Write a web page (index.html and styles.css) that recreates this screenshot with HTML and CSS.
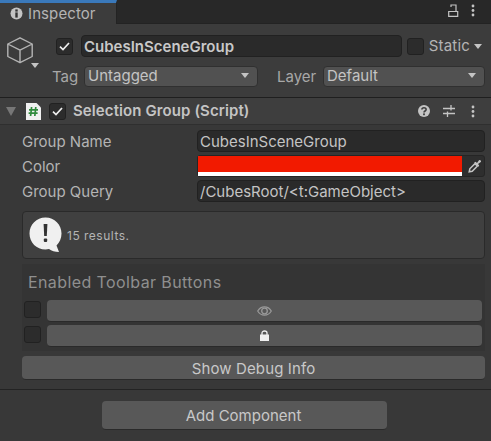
FILE: index.html
```html
<!DOCTYPE html>
<html lang="en">
<head>
    <meta charset="UTF-8">
    <meta name="viewport" content="width=device-width, initial-scale=1.0">
    <title>Inspector</title>
    <link rel="stylesheet" href="styles.css">
</head>
<body>
    <div class="tabbar">
        <div class="tab">
            <svg class="tab-icon" width="13" height="13" viewBox="0 0 13 13"><circle cx="6.5" cy="6.5" r="6" fill="#c4c4c4"/><rect x="5.3" y="2.4" width="2.4" height="2.2" fill="#333"/><rect x="5.3" y="5.4" width="2.4" height="5.2" fill="#333"/></svg>
            <span>Inspector</span>
        </div>
        <div class="tab-actions">
            <svg width="11" height="13" viewBox="0 0 11 13"><path d="M.7 7.5h9v4.8h-9zM8 7.5V1H3V3" fill="none" stroke="#c4c4c4" stroke-width="1.2"/></svg>
            <svg class="dots" width="4" height="13" viewBox="0 0 4 13"><circle cx="2" cy="2" r="1.4"/><circle cx="2" cy="6.5" r="1.4"/><circle cx="2" cy="11" r="1.4"/></svg>
        </div>
    </div>

    <div class="object-header">
        <div class="object-icon">
            <svg width="26" height="27" viewBox="0 0 26 27"><path d="M13 .8 25.2 7V19.5L13 25.7 .8 19.5V7ZM.8 7 13 13.2 25.2 7M13 13.2V25.7" fill="none" stroke="#b4b4b4" stroke-width="1.4" stroke-linejoin="round"/></svg>
            <span class="arrow-small"></span>
        </div>
        <div class="object-fields">
            <div class="name-row">
                <span class="check checked"><svg width="11" height="9" viewBox="0 0 11 9"><path d="M1 4.6 4 7.5 10 1" fill="none" stroke="#efefef" stroke-width="1.7"/></svg></span>
                <div class="input name-input">CubesInSceneGroup</div>
                <span class="check"></span>
                <span class="static-label">Static</span>
                <span class="arrow-down"></span>
            </div>
            <div class="tag-row">
                <span class="tag-label">Tag</span>
                <div class="select tag-select">Untagged<span class="arrow-down"></span></div>
                <span class="layer-label">Layer</span>
                <div class="select layer-select">Default<span class="arrow-down"></span></div>
            </div>
        </div>
    </div>

    <div class="component-header">
        <span class="foldout"></span>
        <svg class="script-icon" width="15" height="17" viewBox="0 0 15 17"><path d="M0 0H10.5L15 4.5V17H0Z" fill="#f0f0f0"/><path d="M5.6 4 4.6 13M9.8 4 8.8 13M3 6.8H12M2.6 10.2H11.6" stroke="#2f8a3c" stroke-width="1.7" fill="none"/></svg>
        <span class="check checked small-check"><svg width="11" height="9" viewBox="0 0 11 9"><path d="M1 4.6 4 7.5 10 1" fill="none" stroke="#efefef" stroke-width="1.7"/></svg></span>
        <span class="component-title">Selection Group (Script)</span>
        <div class="component-actions">
            <svg width="12" height="12" viewBox="0 0 12 12"><circle cx="6" cy="6" r="6" fill="#c4c4c4"/><path d="M3.9 4.6C3.9 2.2 8.1 2.2 8.1 4.5 8.1 6 6 6 6 7.4" fill="none" stroke="#3e3e3e" stroke-width="1.6"/><rect x="5.1" y="8.4" width="1.8" height="1.8" fill="#3e3e3e"/></svg>
            <svg width="12" height="12" viewBox="0 0 12 12"><path d="M0 3.5H12M0 8.5H12M8 0V5.5M4.5 6.5V12" stroke="#c4c4c4" stroke-width="1.3" fill="none"/></svg>
            <svg class="dots" width="4" height="13" viewBox="0 0 4 13"><circle cx="2" cy="2" r="1.4"/><circle cx="2" cy="6.5" r="1.4"/><circle cx="2" cy="11" r="1.4"/></svg>
        </div>
    </div>

    <div class="component-body">
        <div class="field">
            <label>Group Name</label>
            <div class="input field-input">CubesInSceneGroup</div>
        </div>
        <div class="field">
            <label>Color</label>
            <div class="color-field">
                <div class="color-swatch"><div class="color-main"></div><div class="color-alpha"></div></div>
                <svg class="picker" width="14" height="14" viewBox="0 0 14 14"><path d="M1.2 12.8 1.8 9.8 7 4.6 9.4 7 4.2 12.2Z" fill="none" stroke="#c4c4c4" stroke-width="1.5"/><path d="M6.2 3.4 7.6 2.8 9 4 11 1.2C12 .3 13.8 2 12.8 3L10 5 11.2 6.4 10.4 7.8Z" fill="#c4c4c4"/></svg>
            </div>
        </div>
        <div class="field">
            <label>Group Query</label>
            <div class="input field-input">/CubesRoot/&lt;t:GameObject&gt;</div>
        </div>

        <div class="help-box">
            <svg width="33" height="36" viewBox="0 0 33 36"><path d="M16.5 0.5C25.5 0.5 32.5 7.5 32.5 16.5 32.5 21.5 30.5 25.5 27.5 28.5L30 35C26 35 22.5 34 20 32 18.8 32.3 17.7 32.5 16.5 32.5 7.5 32.5 0.5 25.5 0.5 16.5 0.5 7.5 7.5 0.5 16.5 0.5Z" fill="#f0f0f0"/><path d="M14.6 7H18.4L17.8 19H15.2Z" fill="#333"/><rect x="14.8" y="21.5" width="3.4" height="3.6" rx="1" fill="#333"/></svg>
            <span>15 results.</span>
        </div>

        <div class="toolbar-panel">
            <div class="panel-title">Enabled Toolbar Buttons</div>
            <div class="toolbar-row">
                <span class="check"></span>
                <div class="button toolbar-button">
                    <svg width="15" height="12" viewBox="0 0 15 12"><path d="M.7 6C4 .5 11 .5 14.3 6 11 11.5 4 11.5.7 6Z" fill="none" stroke="#9a9a9a" stroke-width="1.2"/><circle cx="7.5" cy="6" r="2.8" fill="none" stroke="#9a9a9a" stroke-width="1.3"/></svg>
                </div>
            </div>
            <div class="toolbar-row">
                <span class="check"></span>
                <div class="button toolbar-button">
                    <svg width="9" height="11" viewBox="0 0 9 11"><path d="M0 4.5H9V11H0Z" fill="#f0f0f0"/><path d="M2 5V3C2 .3 7 .3 7 3V5" fill="none" stroke="#f0f0f0" stroke-width="1.3"/></svg>
                </div>
            </div>
        </div>

        <div class="button debug-button">Show Debug Info</div>
    </div>

    <div class="footer">
        <div class="button add-button">Add Component</div>
    </div>
</body>
</html>
```

FILE: styles.css
```css
html, body {
    height: 100%;
}
body {
    margin: 0;
    background-color: #383838;
    color: #c4c4c4;
    font-family: Inter, "Noto Sans", sans-serif;
    font-size: 15px;
    line-height: 18px;
    overflow: hidden;
}
svg {
    display: block;
    flex: none;
}
.dots {
    fill: #c4c4c4;
}

.tabbar {
    height: 24px;
    display: flex;
    justify-content: space-between;
    background-color: #282828;
    border-bottom: 1px solid #232323;
    box-sizing: border-box;
}
.tab {
    width: 117px;
    height: 24px;
    box-sizing: border-box;
    display: flex;
    align-items: center;
    gap: 5px;
    padding: 3px 0 0 10px;
    background-color: #3c3c3c;
    border-top: 3px solid #3a79bb;
    border-right: 1px solid #232323;
    color: #b4b4b4;
}
.tab span {
    margin-top: -3px;
    letter-spacing: 0.1px;
}
.tab-icon {
    margin-top: -4px;
}
.tab-actions {
    display: flex;
    align-items: center;
    gap: 12px;
    padding: 0 16px 2px 0;
}

.object-header {
    height: 74px;
    box-sizing: border-box;
    display: flex;
    background-color: #3c3c3c;
    border-bottom: 1px solid #1f1f1f;
    padding: 11px 6px 0 7px;
}
.object-icon {
    width: 49px;
    flex: none;
    padding-top: 2px;
}
.arrow-small {
    display: block;
    width: 0;
    margin: -1px 0 0 24px;
    border-left: 4px solid transparent;
    border-right: 4px solid transparent;
    border-top: 5px solid #c4c4c4;
}
.object-fields {
    flex: 1;
}
.name-row {
    height: 22px;
    display: flex;
    align-items: center;
}
.check {
    width: 17px;
    height: 17px;
    box-sizing: border-box;
    flex: none;
    display: flex;
    align-items: center;
    justify-content: center;
    background-color: #2c2c2c;
    border: 1px solid #212121;
    border-radius: 3px;
}
.input {
    height: 22px;
    box-sizing: border-box;
    background-color: #2a2a2a;
    border: 1px solid #212121;
    border-radius: 4px;
    padding: 1px 2px;
    line-height: 19px;
    white-space: nowrap;
}
.name-input {
    flex: 1;
    margin: 0 5px 0 8px;
    font-weight: 600;
    color: #c8c8c8;
}
.static-label {
    margin-left: 5px;
    color: #b4b4b4;
    letter-spacing: 0.2px;
}
.arrow-down {
    width: 0;
    flex: none;
    border-left: 4px solid transparent;
    border-right: 4px solid transparent;
    border-top: 5px solid #c4c4c4;
}
.name-row .arrow-down {
    margin: 0 3px 0 4px;
}
.tag-row {
    height: 21px;
    display: flex;
    align-items: center;
    margin-top: 9px;
}
.tag-label {
    width: 32px;
    margin-left: -4px;
    flex: none;
    color: #a8a8a8;
}
.select {
    height: 21px;
    box-sizing: border-box;
    display: flex;
    align-items: center;
    justify-content: space-between;
    padding: 0 8px 2px 3px;
    background-color: #515151;
    border: 1px solid #303030;
    border-radius: 4px;
    color: #c4c4c4;
}
.tag-select {
    width: 174px;
}
.layer-label {
    width: 46px;
    margin-left: 19px;
    flex: none;
    color: #a8a8a8;
}
.layer-select {
    flex: 1;
}

.component-header {
    height: 27px;
    box-sizing: border-box;
    display: flex;
    align-items: center;
    background-color: #3e3e3e;
    border-bottom: 1px solid #2f2f2f;
    padding: 0 16px 0 6px;
}
.foldout {
    width: 0;
    flex: none;
    border-left: 5px solid transparent;
    border-right: 5px solid transparent;
    border-top: 9px solid #777;
}
.script-icon {
    margin-left: 10px;
}
.small-check {
    margin-left: 8px;
}
.component-title {
    margin-left: 7px;
    font-weight: 600;
    color: #c4c4c4;
    letter-spacing: 0.1px;
}
.component-actions {
    margin-left: auto;
    display: flex;
    align-items: center;
    gap: 13px;
}
.component-actions .dots {
    margin-left: 3px;
}

.component-body {
    height: 265px;
    box-sizing: border-box;
    padding: 5px 6px 0 22px;
    border-bottom: 1px solid #232323;
}
.field {
    height: 25px;
    display: flex;
    align-items: flex-start;
}
.field label {
    width: 175px;
    flex: none;
    line-height: 24px;
    color: #b4b4b4;
}
.field-input {
    flex: 1;
}
.color-field {
    flex: 1;
    height: 22px;
    box-sizing: border-box;
    display: flex;
    background-color: #2e2e2e;
    border: 1px solid #252525;
    border-radius: 3px;
}
.color-swatch {
    width: 264px;
    flex: none;
    display: flex;
    flex-direction: column;
}
.color-main {
    height: 16px;
    background-color: #f21a00;
}
.color-alpha {
    height: 4px;
    background-color: #fff;
}
.picker {
    margin: 3px 0 0 6px;
}

.help-box {
    height: 48px;
    box-sizing: border-box;
    margin-top: 6px;
    display: flex;
    align-items: center;
    gap: 5px;
    padding: 0 0 0 6px;
    background-color: #404040;
    border: 1px solid #2a2a2a;
    border-radius: 4px;
    font-size: 12px;
    color: #b4b4b4;
    letter-spacing: 0.5px;
}
.help-box span {
    margin-top: 1px;
}

.toolbar-panel {
    height: 87px;
    box-sizing: border-box;
    margin-top: 5px;
    padding: 9px 3px 0 2px;
    background-color: #343434;
}
.panel-title {
    height: 27px;
    padding-left: 4px;
    font-size: 16px;
    color: #8f8f8f;
    letter-spacing: 0.4px;
}
.toolbar-row {
    height: 25px;
    display: flex;
    align-items: flex-start;
    gap: 6px;
}
.toolbar-row .check {
    margin-top: 1px;
}
.button {
    box-sizing: border-box;
    display: flex;
    align-items: center;
    justify-content: center;
    background-color: #585858;
    border-bottom: 1px solid #2a2a2a;
    border-radius: 4px;
    color: #c8c8c8;
}
.toolbar-button {
    flex: 1;
    height: 22px;
}
.debug-button {
    height: 24px;
    margin-top: 5px;
    padding-top: 2px;
    letter-spacing: 0.12px;
}

.footer {
    display: flex;
    padding: 11px 0 0 102px;
}
.add-button {
    width: 285px;
    height: 29px;
    padding: 2px 2px 0 0;
}
```
